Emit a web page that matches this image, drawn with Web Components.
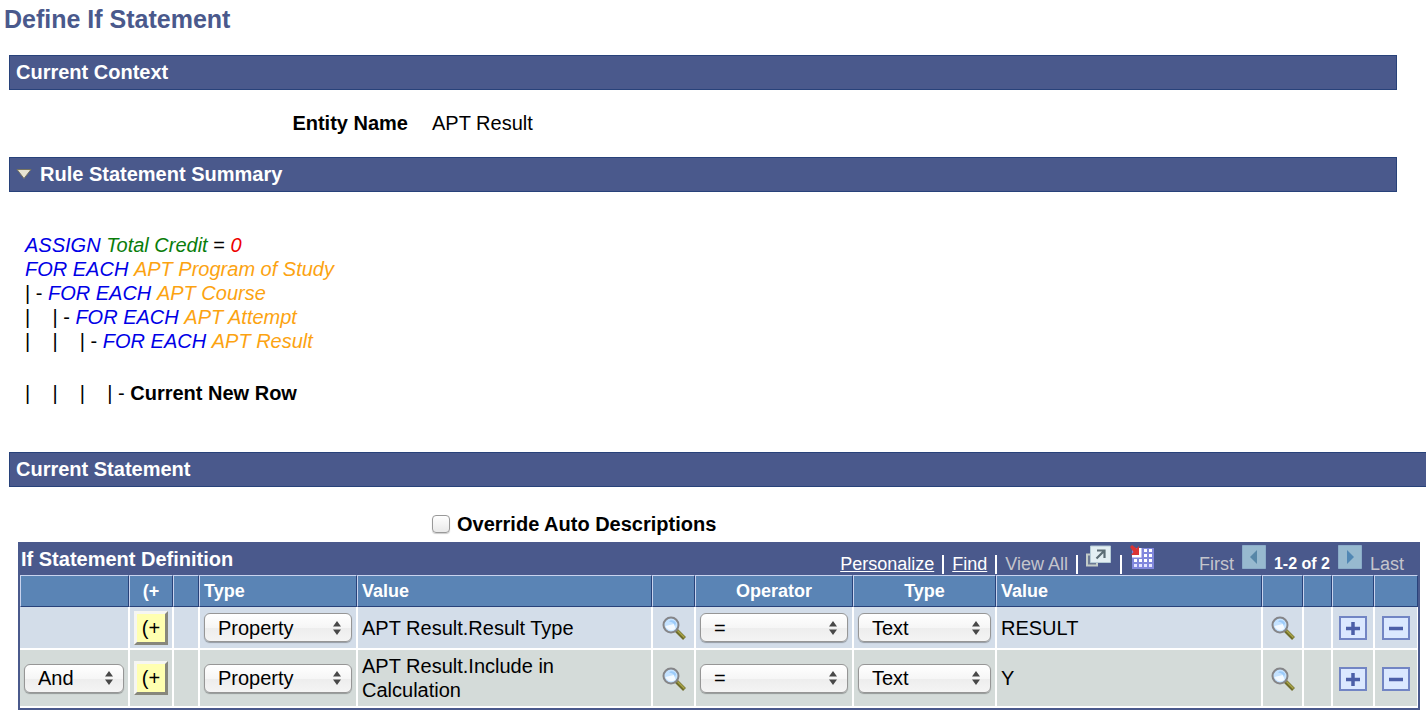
<!DOCTYPE html>
<html lang="en">
<head>
<meta charset="utf-8">
<meta name="viewport" content="width=device-width, initial-scale=1">
<title>Define If Statement</title>
<style>
  body {
    margin: 0;
    background: #fff;
    color: #000;
    font: 20px/24px "Liberation Sans", Arial, sans-serif;
  }
</style>
</head>
<body>
<if-statement-page></if-statement-page>

<script>
const ICONS = {
  search: `<svg width="24" height="24" viewBox="0 0 24 24">
    <path d="M14 14l8.500 8.500" stroke="#6f6d2c" stroke-width="4"/>
    <path d="M15.500 14.500l7 7" stroke="#aaa548" stroke-width="1.500"/>
    <circle cx="9" cy="9" r="7.500" fill="#c4e2ff" stroke="#858588" stroke-width="2"/>
    <path d="M3.500 10a6 6 0 0 0 10 2.500L12 8z" fill="#f3f9ff"/>
    <path d="M7 5.500c2-2.500 6-1 7 1.500l-1 3c-1-3-3-4-6-4.500z" fill="#9ccbfa"/>
  </svg>`,
  add: `<svg width="28" height="24" viewBox="0 0 28 24">
    <rect x="1" y="1" width="26" height="22" fill="#dbe8ff" stroke="#7285c4" stroke-width="2"/>
    <path d="M7 12.500h14M14 6v13" stroke="#4c5fa8" stroke-width="3.500"/>
  </svg>`,
  remove: `<svg width="28" height="24" viewBox="0 0 28 24">
    <rect x="1" y="1" width="26" height="22" fill="#dbe8ff" stroke="#7285c4" stroke-width="2"/>
    <path d="M7 12.500h14" stroke="#4c5fa8" stroke-width="3.500"/>
  </svg>`,
  popup: `<svg width="26" height="22" viewBox="0 0 26 22">
    <path d="M1 9.500h10v11H1z" fill="#6c7a94" stroke="#c3ccc8" stroke-width="2"/>
    <path d="M4.500 1h20v16.500h-20z" fill="#e3eff3" stroke="#b5cbd6"/>
    <path d="M10.500 13.500l7-7M11 5.500h7.500V13" fill="none" stroke="#5c6d75" stroke-width="2.200"/>
  </svg>`,
  download: `<svg width="24" height="24" viewBox="0 0 24 24">
    <path d="M2 3h22v21H2z" fill="#8087dc"/>
    <path d="M2 11h8V3" fill="none" stroke="#fff" stroke-width="3"/>
    <g fill="#fff">
      <path d="M14 4h3v3h-3zM19 4h3v3h-3zM14 9h3v3h-3zM19 9h3v3h-3z"/>
      <path d="M4 14h3v3H4zM9 14h3v3H9zM14 14h3v3h-3zM19 14h3v3h-3z"/>
    </g>
    <path d="M4 19h3v3H4zM9 19h3v3H9zM14 19h3v3h-3zM19 19h3v3h-3z" fill="#e4e5ff"/>
    <path d="M0 2l2-2 4.500 3.500L9 1v9H1l2.500-3z" fill="#dc3434"/>
  </svg>`,
  prev: `<svg width="24" height="24" viewBox="0 0 24 24">
    <path d="M.500.500h23v23H.500z" fill="#97b9cf" stroke="#8aabc8"/>
    <path d="M15 5v14l-7-7z" fill="#5887a8"/>
  </svg>`,
  next: `<svg width="24" height="24" viewBox="0 0 24 24">
    <path d="M.500.500h23v23H.500z" fill="#97b9cf" stroke="#8aabc8"/>
    <path d="M9 5v14l7-7z" fill="#5187b4"/>
  </svg>`,
  expanded: `<svg width="16" height="12" viewBox="0 0 16 12">
    <path d="M1 .500h14L8 9.500z" fill="#e8e4d2" stroke="#77745f"/>
  </svg>`,
  updown: `<svg width="8" height="14" viewBox="0 0 8 14">
    <path d="M0 5.500L4 0l4 5.500zM0 8.500L4 14l4-5.500z" fill="#484848"/>
  </svg>`
};

class UiIcon extends HTMLElement {
  constructor() {
    super();
    this.attachShadow({ mode: 'open' });
  }

  connectedCallback() {
    this.shadowRoot.innerHTML = `
      <style>
        :host { display: inline-flex; }
        svg { display: block; }
      </style>
      ${ICONS[this.getAttribute('name')]}
    `;
  }
}
customElements.define('ui-icon', UiIcon);

class IconButton extends HTMLElement {
  constructor() {
    super();
    this.attachShadow({ mode: 'open' });
  }

  connectedCallback() {
    const disabled = this.hasAttribute('disabled') ? 'disabled' : '';
    this.shadowRoot.innerHTML = `
      <style>
        :host { display: inline-flex; }
        button {
          display: flex;
          padding: 0;
          border: 0;
          background: none;
          cursor: pointer;
        }
        button:disabled { cursor: default; }
      </style>
      <button type="button" aria-label="${this.getAttribute('label')}" ${disabled}>
        <ui-icon name="${this.getAttribute('icon')}"></ui-icon>
      </button>
    `;
  }
}
customElements.define('icon-button', IconButton);

class DropDown extends HTMLElement {
  constructor() {
    super();
    this.attachShadow({ mode: 'open' });
  }

  connectedCallback() {
    const options = this.getAttribute('options').split(',');
    this.shadowRoot.innerHTML = `
      <style>
        :host {
          display: grid;
          align-items: center;
        }
        select, ui-icon { grid-area: 1 / 1; }
        select {
          appearance: none;
          box-sizing: border-box;
          width: 100%;
          height: 29px;
          margin: 0;
          padding: 0 28px 0 13px;
          border: 1px solid #969696;
          border-radius: 6px;
          background: linear-gradient(#fff, #f6f6f6 50%, #ededed 51%, #f4f4f4);
          box-shadow: 0 1px 1px rgba(0, 0, 0, 0.3);
          color: #000;
          font: inherit;
        }
        ui-icon {
          justify-self: end;
          margin-right: 11px;
          pointer-events: none;
        }
      </style>
      <select aria-label="${this.getAttribute('label')}">
        ${options.map((o) => `<option>${o}</option>`).join('')}
      </select>
      <ui-icon name="updown"></ui-icon>
    `;
  }
}
customElements.define('drop-down', DropDown);

class SectionBar extends HTMLElement {
  constructor() {
    super();
    this.attachShadow({ mode: 'open' });
  }

  connectedCallback() {
    const collapsible = this.hasAttribute('collapsible');
    this.shadowRoot.innerHTML = `
      <style>
        :host {
          display: block;
          border: 1px solid #28427a;
          background: #4a598c;
          color: #fff;
        }
        h2 {
          display: flex;
          align-items: center;
          gap: 8px;
          margin: 0;
          padding: 4px 6px;
          font-size: 20px;
          line-height: 25px;
        }
      </style>
      <h2>
        ${collapsible ? '<icon-button icon="expanded" label="Collapse section"></icon-button>' : ''}
        <slot></slot>
      </h2>
    `;
  }
}
customElements.define('section-bar', SectionBar);

class RuleSummary extends HTMLElement {
  constructor() {
    super();
    this.attachShadow({ mode: 'open' });
    this.lines = [
      '<i class="key">ASSIGN</i> <i class="target">Total Credit</i> = <i class="literal">0</i>',
      '<i class="key">FOR EACH</i> <i class="entity">APT Program of Study</i>',
      '| - <i class="key">FOR EACH</i> <i class="entity">APT Course</i>',
      '|    | - <i class="key">FOR EACH</i> <i class="entity">APT Attempt</i>',
      '|    |    | - <i class="key">FOR EACH</i> <i class="entity">APT Result</i>',
      '|    |    |    | - <b>Current New Row</b>'
    ];
    this.render();
  }

  render() {
    this.shadowRoot.innerHTML = `
      <style>
        :host { display: block; }
        p {
          margin: 0;
          white-space: pre-wrap;
        }
        p:last-child { margin-top: 28px; }
        .key { color: #0000e6; }
        .target { color: #0a7d0a; }
        .literal { color: #ee0000; }
        .entity { color: #fca311; }
      </style>
      ${this.lines.map((line) => `<p>${line}</p>`).join('')}
    `;
  }
}
customElements.define('rule-summary', RuleSummary);

class GridToolbar extends HTMLElement {
  constructor() {
    super();
    this.attachShadow({ mode: 'open' });
    this.shadowRoot.innerHTML = `
      <style>
        :host {
          display: flex;
          justify-content: space-between;
          height: 33px;
          padding: 0 14px 0 1px;
          background: #4a598c;
          color: #fff;
        }
        h3 {
          margin: 0;
          font-size: 20px;
          line-height: 34px;
        }
        nav, .pager {
          display: flex;
          align-items: flex-end;
          gap: 8px;
          font-size: 18px;
          line-height: 22px;
        }
        .pager {
          align-self: stretch;
          margin-left: 37px;
        }
        a { color: #fff; }
        .off { color: #c4c5cc; }
        .bar {
          width: 2px;
          height: 19px;
          margin-bottom: 1px;
          background: #fff;
        }
        b { font-size: 16px; }
        icon-button {
          align-self: flex-start;
          padding-top: 3px;
        }
      </style>
      <h3><slot></slot></h3>
      <nav>
        <a href="#">Personalize</a>
        <span class="bar"></span>
        <a href="#">Find</a>
        <span class="bar"></span>
        <span class="off">View All</span>
        <span class="bar"></span>
        <icon-button icon="popup" label="Zoom grid"></icon-button>
        <span class="bar"></span>
        <icon-button icon="download" label="Download to spreadsheet"></icon-button>
        <div class="pager">
          <span class="off">First</span>
          <icon-button icon="prev" label="Previous rows" disabled></icon-button>
          <b>1-2 of 2</b>
          <icon-button icon="next" label="Next rows" disabled></icon-button>
          <span class="off">Last</span>
        </div>
      </nav>
    `;
  }
}
customElements.define('grid-toolbar', GridToolbar);

class StatementGrid extends HTMLElement {
  constructor() {
    super();
    this.attachShadow({ mode: 'open' });
    this.rows = [
      { join: '', type: 'Property', value: 'APT Result.Result Type', operand: 'RESULT' },
      { join: 'And', type: 'Property', value: 'APT Result.Include in Calculation', operand: 'Y' }
    ];
    this.render();
  }

  row(r) {
    return `
      <tr>
        <td>${r.join ? `<drop-down label="Join" options="${r.join},Or"></drop-down>` : ''}</td>
        <td class="mid"><button type="button" class="paren">(+</button></td>
        <td></td>
        <td><drop-down label="Left type" options="${r.type},Text"></drop-down></td>
        <td>${r.value}</td>
        <td class="mid"><icon-button icon="search" label="Look up value"></icon-button></td>
        <td><drop-down label="Operator" options="=,&lt;,&gt;"></drop-down></td>
        <td><drop-down label="Right type" options="Text,Property"></drop-down></td>
        <td>${r.operand}</td>
        <td class="mid"><icon-button icon="search" label="Look up value"></icon-button></td>
        <td></td>
        <td class="mid"><icon-button icon="add" label="Add row"></icon-button></td>
        <td class="mid"><icon-button icon="remove" label="Delete row"></icon-button></td>
      </tr>
    `;
  }

  render() {
    // null lets the column take the space that is left
    const widths = [109, 44, 26, 158, 295, 43, 158, 143, null, 41, 29, 42, 44];
    this.shadowRoot.innerHTML = `
      <style>
        :host {
          display: block;
          border: 2px solid #4a598c;
          border-top-width: 0;
        }
        table {
          width: 100%;
          table-layout: fixed;
          border-spacing: 0;
        }
        th {
          box-sizing: border-box;
          height: 32px;
          padding: 0 4px;
          border: 1px solid #28427a;
          border-top-color: #c9d3ee;
          border-left-color: #c9d3ee;
          background: #5a84b5;
          color: #fff;
          font-size: 18px;
          text-align: center;
        }
        th.start { text-align: left; }
        td {
          box-sizing: border-box;
          height: 43px;
          padding: 0 4px;
          border: solid #fff;
          border-width: 0 1px 2px;
          background: #d3dde9;
        }
        td:first-child { border-left-width: 0; }
        tr:last-child td {
          height: 58px;
          background: #d4dbd9;
        }
        .mid {
          padding: 0;
          text-align: center;
        }
        .mid icon-button { vertical-align: middle; }
        .paren {
          box-sizing: border-box;
          width: 34px;
          height: 34px;
          padding: 0;
          border: 3px solid;
          border-color: #f6f6f2 #87877c #87877c #f6f6f2;
          background: #ffffb0;
          color: #000;
          font: inherit;
          vertical-align: middle;
        }
      </style>
      <grid-toolbar>If Statement Definition</grid-toolbar>
      <table aria-label="If Statement Definition">
        <colgroup>
          ${widths.map((w) => (w ? `<col style="width: ${w}px">` : '<col>')).join('')}
        </colgroup>
        <thead>
          <tr>
            <th></th>
            <th>(+</th>
            <th></th>
            <th class="start">Type</th>
            <th class="start">Value</th>
            <th></th>
            <th>Operator</th>
            <th>Type</th>
            <th class="start">Value</th>
            <th></th>
            <th></th>
            <th></th>
            <th></th>
          </tr>
        </thead>
        <tbody>${this.rows.map((r) => this.row(r)).join('')}</tbody>
      </table>
    `;
  }
}
customElements.define('statement-grid', StatementGrid);

class IfStatementPage extends HTMLElement {
  constructor() {
    super();
    this.attachShadow({ mode: 'open' });
    this.shadowRoot.innerHTML = `
      <style>
        :host {
          display: block;
          padding-top: 4px;
        }
        h1 {
          margin: 0 0 21px 4px;
          color: #4a598c;
          font-size: 25px;
          line-height: 30px;
        }
        section { margin-left: 9px; }
        section-bar { margin-right: 29px; }
        .statement section-bar {
          margin-right: 0;
          border-right: 0;
        }
        .field {
          display: grid;
          grid-template-columns: 399px 1fr;
          column-gap: 24px;
          margin: 0;
          padding: 21px 0 22px;
        }
        dt {
          font-weight: bold;
          text-align: right;
        }
        dd { margin: 0; }
        rule-summary { padding: 41px 16px 47px; }
        .override {
          display: flex;
          align-items: center;
          gap: 7px;
          padding: 25px 0 6px 423px;
          font-weight: bold;
        }
        input {
          appearance: none;
          box-sizing: border-box;
          width: 18px;
          height: 18px;
          margin: 0;
          border: 1px solid #999;
          border-radius: 4px;
          background: linear-gradient(#fff, #e9e9e9);
          box-shadow: 0 1px 1px rgba(0, 0, 0, 0.2);
        }
        statement-grid { margin: 0 6px 4px 9px; }
      </style>
      <h1>Define If Statement</h1>
      <section>
        <section-bar>Current Context</section-bar>
        <dl class="field">
          <dt>Entity Name</dt>
          <dd>APT Result</dd>
        </dl>
      </section>
      <section>
        <section-bar collapsible>Rule Statement Summary</section-bar>
        <rule-summary></rule-summary>
      </section>
      <section class="statement">
        <section-bar>Current Statement</section-bar>
        <div class="override">
          <input type="checkbox" id="override">
          <label for="override">Override Auto Descriptions</label>
        </div>
        <statement-grid></statement-grid>
      </section>
    `;
  }
}
customElements.define('if-statement-page', IfStatementPage);
</script>
</body>
</html>
